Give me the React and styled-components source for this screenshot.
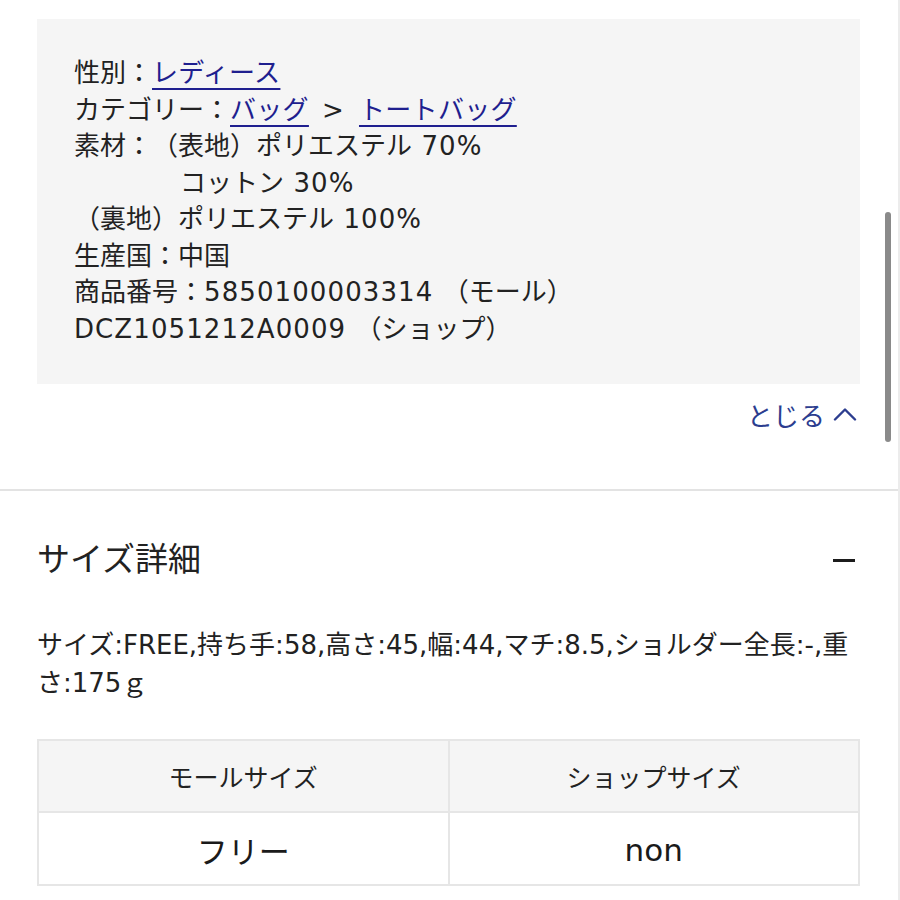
import React from "react";
import styled, { createGlobalStyle } from "styled-components";

const GlobalStyle = createGlobalStyle`
  html, body { margin: 0; padding: 0; background: #ffffff; }
  body {
    font-family: "DejaVu Sans", "Noto Sans CJK JP", sans-serif;
    color: #222222;
    text-spacing-trim: space-all;
    -webkit-font-smoothing: antialiased;
  }
`;

const Page = styled.div`
  position: relative;
  width: 900px;
  height: 900px;
  overflow: hidden;
  box-sizing: border-box;
  border-right: 2px solid #ececec;
`;

const SpecSection = styled.section`
  padding: 19px 38px 0 37px;
`;

const SpecBox = styled.div`
  background: #f5f5f5;
  padding: 36px 37px 37px;
  font-size: 26px;
  line-height: 36.5px;
  color: #222;
`;

const SpecLine = styled.div`
  white-space: pre;
  padding-left: ${(p) => p.$indent || 0}px;
`;

const Latin = styled.span`
  letter-spacing: 1.1px;
`;

const Separator = styled.span`
  margin: 0 7px 0 13px;
`;

const Link = styled.a`
  color: #1f1f8f;
  text-decoration: underline;
  text-decoration-thickness: 2px;
  text-underline-offset: 6px;
  letter-spacing: 0.3px;
  cursor: pointer;
`;

const CloseRow = styled.div`
  display: flex;
  justify-content: flex-end;
  align-items: center;
  gap: 8px;
  margin-top: 12px;
  padding-right: 3px;
  height: 36px;
  font-size: 26px;
  color: #2c3d8f;
`;

const Divider = styled.hr`
  margin: 57px 0 0;
  border: none;
  border-top: 2px solid #e3e3e3;
`;

const SizeSection = styled.section`
  padding: 47px 38px 0 37px;
`;

const SizeHeader = styled.div`
  display: flex;
  justify-content: space-between;
  align-items: center;
  height: 44px;
`;

const Heading = styled.h2`
  margin: 0;
  font-size: 33px;
  font-weight: 400;
  line-height: 44px;
  color: #222;
`;

const Minus = styled.span`
  display: block;
  width: 22px;
  height: 3px;
  background: #1c1c1c;
  margin-right: 5px;
`;

const Description = styled.p`
  margin: 44px 0 0;
  font-size: 26px;
  line-height: 38px;
  color: #222;
`;

const Table = styled.table`
  margin-top: 37px;
  width: 100%;
  border-collapse: collapse;
  table-layout: fixed;
`;

const HeadCell = styled.th`
  height: 70px;
  border: 2px solid #e6e6e6;
  background: #f5f5f5;
  font-weight: 400;
  font-size: 25px;
  color: #222;
  text-align: center;
  padding: 0;
`;

const BodyCell = styled.td`
  height: 69px;
  border: 2px solid #e6e6e6;
  background: #ffffff;
  font-size: 31px;
  color: #1a1a1a;
  text-align: center;
  padding: 2px 0 0;
`;

const Scrollbar = styled.div`
  position: absolute;
  top: 212px;
  right: 7px;
  width: 6px;
  height: 230px;
  border-radius: 3px;
  background: #8a8a8a;
`;

const Chevron = () => (
  <svg width="24" height="14" viewBox="0 0 24 14" fill="none">
    <path d="M2 12.5 L12 2.5 L22 12.5" stroke="#2c3d8f" strokeWidth="2.4" strokeLinecap="round" strokeLinejoin="round" />
  </svg>
);

export default function App() {
  return (
    <>
      <GlobalStyle />
      <Page>
        <SpecSection>
          <SpecBox>
            <SpecLine>性別：<Link>レディース</Link></SpecLine>
            <SpecLine>カテゴリー：<Link>バッグ</Link><Separator>&gt;</Separator> <Link>トートバッグ</Link></SpecLine>
            <SpecLine>素材：（表地）ポリエステル<Latin> 70%</Latin></SpecLine>
            <SpecLine $indent={106}>コットン<Latin> 30%</Latin></SpecLine>
            <SpecLine>（裏地）ポリエステル<Latin> 100%</Latin></SpecLine>
            <SpecLine>生産国：中国</SpecLine>
            <SpecLine>商品番号：<Latin>5850100003314 </Latin>（モール）</SpecLine>
            <SpecLine><Latin>DCZ1051212A0009 </Latin>（ショップ）</SpecLine>
          </SpecBox>
          <CloseRow>
            <span>とじる</span>
            <Chevron />
          </CloseRow>
        </SpecSection>
        <Divider />
        <SizeSection>
          <SizeHeader>
            <Heading>サイズ詳細</Heading>
            <Minus />
          </SizeHeader>
          <Description>
            サイズ:FREE,持ち手:58,高さ:45,幅:44,マチ:8.5,ショルダー全長:-,重さ:175ｇ
          </Description>
          <Table>
            <thead>
              <tr>
                <HeadCell>モールサイズ</HeadCell>
                <HeadCell>ショップサイズ</HeadCell>
              </tr>
            </thead>
            <tbody>
              <tr>
                <BodyCell>フリー</BodyCell>
                <BodyCell>non</BodyCell>
              </tr>
            </tbody>
          </Table>
        </SizeSection>
        <Scrollbar />
      </Page>
    </>
  );
}
